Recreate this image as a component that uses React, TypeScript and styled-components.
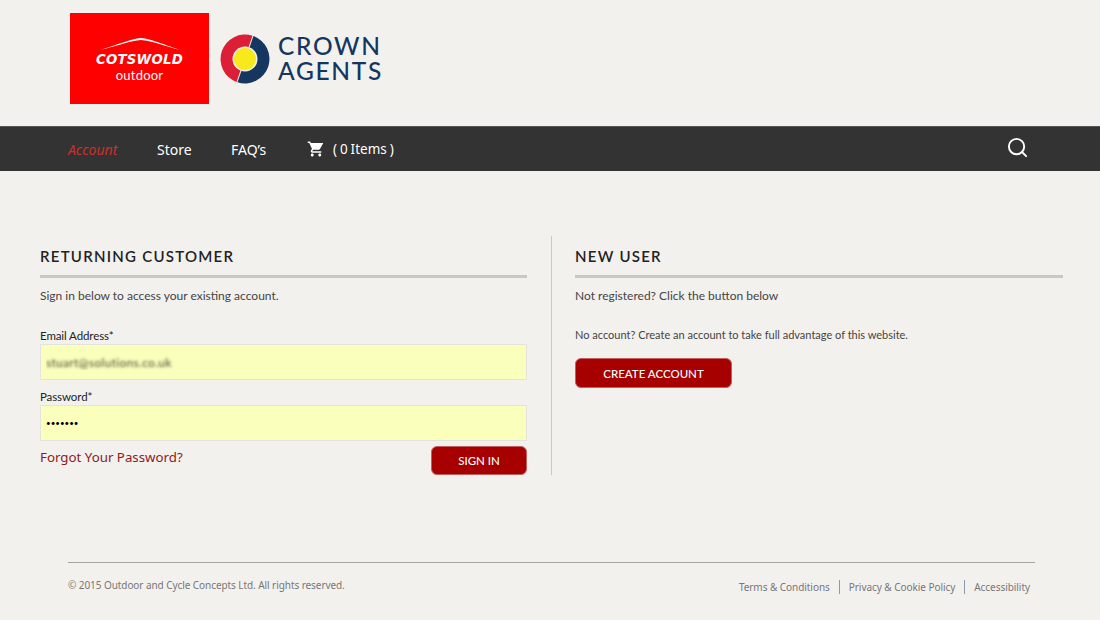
import React from 'react'
import styled, { createGlobalStyle } from 'styled-components'
import { Search } from 'lucide-react'

const GlobalStyle = createGlobalStyle`
  html, body {
    margin: 0;
    padding: 0;
    background: #f3f1ee;
    font-family: 'Lato', 'Liberation Sans', sans-serif;
    color: #444;
  }
  * { box-sizing: border-box; }
`

const Page = styled.div`
  width: 1100px;
  height: 620px;
  overflow: hidden;
`
const Header = styled.header`
  height: 126px;
  padding: 13px 0 0 70px;
  display: flex;
  align-items: flex-start;
  gap: 11px;
`
const CotswoldLogo = styled.div`
  width: 139px;
  height: 91px;
  background: #fe0000;
  color: #fff;
  display: flex;
  flex-direction: column;
  align-items: center;
  padding-top: 25px;
`
const Roof = styled.svg`
  display: block;
  width: 80px;
  height: 12px;
`
const CotswoldName = styled.div`
  font-family: 'DejaVu Sans', sans-serif;
  font-size: 13.3px;
  line-height: 14px;
  margin-top: 3px;
  font-weight: 700;
  font-style: italic;
  letter-spacing: 0.2px;
`
const CotswoldSub = styled.div`
  font-family: 'Lato', sans-serif;
  font-size: 13px;
  line-height: 14px;
  margin-top: 1px;
  letter-spacing: 0.2px;
`
const CrownLogo = styled.div`
  display: flex;
  align-items: center;
  gap: 8px;
  height: 50px;
  margin-top: 21px;
`
const CrownName = styled.div`
  margin-top: -2px;
  color: #14365f;
  font-family: 'Lato', sans-serif;
  font-size: 24.5px;
  font-weight: 500;
  line-height: 25px;
  letter-spacing: 1.7px;
`
const Nav = styled.nav`
  height: 45px;
  background: #333;
  border-top: 1px solid #555;
  padding: 0 71px 0 68px;
  display: flex;
  align-items: center;
  font-family: 'Noto Sans', sans-serif;
  font-size: 14px;
  color: #fff;
`
const NavLink = styled.a<{ $active?: boolean; $width: number }>`
  width: ${p => p.$width}px;
  color: ${p => (p.$active ? '#c9302c' : '#fff')};
  font-style: ${p => (p.$active ? 'italic' : 'normal')};
`
const Cart = styled.div`
  display: flex;
  align-items: center;
  gap: 8px;
  font-size: 13.5px;
  word-spacing: -0.6px;
`
const SearchButton = styled.div`
  margin-left: auto;
  display: flex;
  margin-top: -3px;
`
const Main = styled.main`
  display: grid;
  grid-template-columns: 511px 512px;
  padding: 65px 0 0 40px;
  height: 391px;
`
const Column = styled.section<{ $divided?: boolean }>`
  height: 239px;
  ${p => (p.$divided ? 'border-left: 1px solid #c9c8c5; padding-left: 23px;' : '')}
`
const LeftColumn = styled(Column)`
  padding-right: 24px;
`
const Heading = styled.h2`
  margin: 0;
  height: 42px;
  padding-top: 10px;
  border-bottom: 3px solid #c9c8c5;
  font-size: 15px;
  line-height: 20px;
  font-weight: 600;
  letter-spacing: 1.25px;
  color: #222;
`
const Intro = styled.p`
  margin: 10px 0 0;
  font-size: 12px;
  line-height: 16px;
`
const Label = styled.label<{ $top: number }>`
  display: block;
  margin-top: ${p => p.$top}px;
  font-size: 11.5px;
  line-height: 14px;
  letter-spacing: -0.1px;
  color: #222;
`
const Field = styled.input`
  display: block;
  width: 100%;
  height: 36px;
  margin-top: 1px;
  padding: 0 5px;
  background: #fbffbc;
  border: 1px solid #e4e4dc;
  outline: none;
  font-family: 'Lato', sans-serif;
  font-size: 8px;
`
const BlurredField = styled(Field)`
  font-size: 12px;
  color: transparent;
  text-shadow: 0 0 3px #4c4c38;
  letter-spacing: 0.3px;
`
const FormFooter = styled.div`
  display: flex;
  justify-content: space-between;
  align-items: flex-start;
  margin-top: 5px;
`
const Forgot = styled.a`
  margin-top: 1px;
  font-family: 'Noto Sans', sans-serif;
  font-size: 13.3px;
  line-height: 20px;
  color: #8e1a1a;
`
const Button = styled.button<{ $width: number; $height: number }>`
  width: ${p => p.$width}px;
  height: ${p => p.$height}px;
  border: 1px solid #c26060;
  border-radius: 6px;
  background: #a60000;
  color: #fff;
  font-family: 'Lato', sans-serif;
  font-size: 11.5px;
  font-weight: 500;
  padding: 0;
`
const CreateNote = styled.p`
  margin: 23px 0 15px;
  font-size: 11px;
  line-height: 16px;
`
const Footer = styled.footer`
  margin: 0 65px 0 68px;
  border-top: 1px solid #a5a4a1;
  display: flex;
  justify-content: space-between;
  font-family: 'Noto Sans', sans-serif;
  font-size: 10px;
  color: #777;
`
const Copyright = styled.div`
  margin-top: 15px;
  line-height: 14px;
  letter-spacing: -0.07px;
`
const FooterLinks = styled.div`
  display: flex;
  margin: 17px 5px 0 0;
  line-height: 14px;
  letter-spacing: -0.05px;
`
const FooterLink = styled.a`
  padding: 0 9px;
  & + & {
    border-left: 1px solid #8a9ab0;
  }
  &:last-child {
    padding-right: 0;
  }
`

const App = () => (
  <Page>
    <GlobalStyle />
    <Header>
      <CotswoldLogo>
        <Roof viewBox="0 0 80 12">
          <path d="M0 12 C 20 6 30 1 41 0 C 52 1 62 6 80 12 C 62 7 52 3 41 2 C 30 3 20 7 0 12 Z" fill="#fff" />
        </Roof>
        <CotswoldName>COTSWOLD</CotswoldName>
        <CotswoldSub>outdoor</CotswoldSub>
      </CotswoldLogo>
      <CrownLogo>
        <svg width="50" height="50" viewBox="0 0 50 50">
          <path d="M32.5 1.7 A24.5 24.5 0 0 0 16.5 48 Z" fill="#dc1f36" />
          <path d="M33.5 2 A24.5 24.5 0 0 1 17.5 48.3 Z" fill="#14365f" />
          <circle cx="25" cy="25" r="12.5" fill="#f3f1ee" />
          <circle cx="25" cy="25" r="11" fill="#f7e91b" />
        </svg>
        <CrownName>
          CROWN
          <br />
          AGENTS
        </CrownName>
      </CrownLogo>
    </Header>
    <Nav>
      <NavLink $active $width={89}>Account</NavLink>
      <NavLink $width={74}>Store</NavLink>
      <NavLink $width={76}>FAQ’s</NavLink>
      <Cart>
        <svg width="18" height="18" viewBox="0 0 24 24" fill="#fff">
          <path d="M7 18c-1.1 0-2 .9-2 2s.9 2 2 2 2-.9 2-2-.9-2-2-2zM1 2v2h2l3.6 7.6-1.35 2.4C4.52 15.37 5.48 17 7 17h12v-2H7l1.1-2h7.45c.75 0 1.41-.41 1.75-1.03L21.7 4H5.2l-.9-2H1zm16 16c-1.1 0-2 .9-2 2s.9 2 2 2 2-.9 2-2-.9-2-2-2z" />
        </svg>
        <span>( 0 Items )</span>
      </Cart>
      <SearchButton>
        <Search size={23} color="#fff" strokeWidth={2} />
      </SearchButton>
    </Nav>
    <Main>
      <LeftColumn>
        <Heading>RETURNING CUSTOMER</Heading>
        <Intro>Sign in below to access your existing account.</Intro>
        <Label $top={25}>Email Address*</Label>
        <BlurredField readOnly value="stuart@solutions.co.uk" />
        <Label $top={10}>Password*</Label>
        <Field readOnly type="password" value="1234567" />
        <FormFooter>
          <Forgot>Forgot Your Password?</Forgot>
          <Button $width={96} $height={29}>SIGN IN</Button>
        </FormFooter>
      </LeftColumn>
      <Column $divided>
        <Heading>NEW USER</Heading>
        <Intro>Not registered? Click the button below</Intro>
        <CreateNote>No account? Create an account to take full advantage of this website.</CreateNote>
        <Button $width={157} $height={30}>CREATE ACCOUNT</Button>
      </Column>
    </Main>
    <Footer>
      <Copyright>© 2015 Outdoor and Cycle Concepts Ltd. All rights reserved.</Copyright>
      <FooterLinks>
        <FooterLink>Terms &amp; Conditions</FooterLink>
        <FooterLink>Privacy &amp; Cookie Policy</FooterLink>
        <FooterLink>Accessibility</FooterLink>
      </FooterLinks>
    </Footer>
  </Page>
)

export default App
